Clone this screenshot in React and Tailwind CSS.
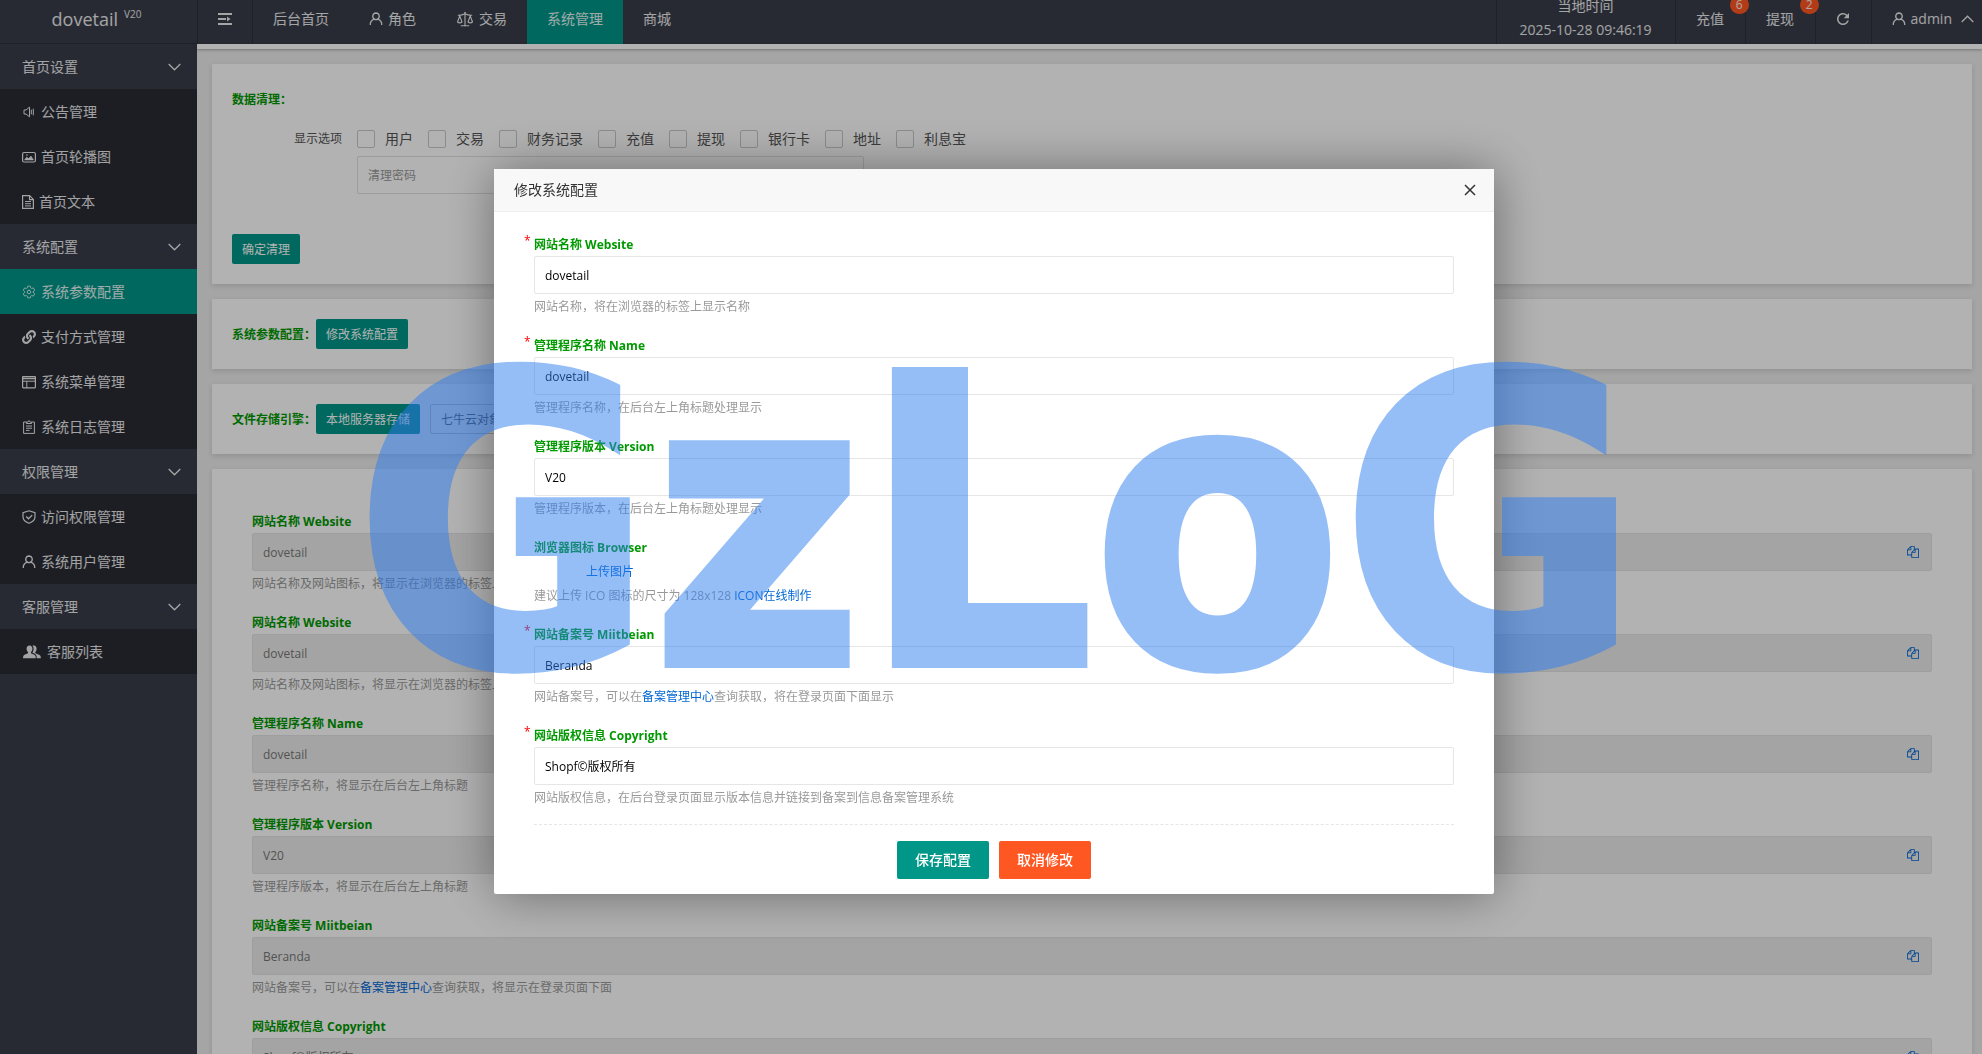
import { useState } from "react";
import { FaLink } from "react-icons/fa";
import { IoSettingsOutline } from "react-icons/io5";
import { MdRefresh } from "react-icons/md";
import { Scale } from "lucide-react";

const Icon = ({ children, className = "size-[14px]", box = "0 0 14 14" }) => (
  <svg
    className={`shrink-0 ${className}`}
    viewBox={box}
    fill="none"
    stroke="currentColor"
    aria-hidden="true"
  >
    {children}
  </svg>
);

const UserIcon = () => (
  <Icon>
    <path d="M7 1a3.3 3.3 0 0 1 1.7 6.1 5.7 5.7 0 0 1 4 5.9M7 1a3.3 3.3 0 0 0-1.7 6.1A5.7 5.7 0 0 0 1.3 13M5.3 7.1c1 .7 2.400.7 3.4 0" strokeWidth="1.3" />
  </Icon>
);

const SpeakerIcon = () => (
  <Icon>
    <path d="M2 5h2l3.500-2.800v9.600L4 9H2zM9.300 4.700v4.600M11.300 3.700v6.600" />
  </Icon>
);

const PictureIcon = () => (
  <Icon>
    <rect x="0.600" y="2.500" width="12.800" height="9.500" rx="1.500" strokeWidth="1.200" />
    <path d="M2.500 10l2.200-3 1.800 1.600L9 6l2.500 4z" fill="currentColor" strokeWidth="0.500" />
    <circle cx="5" cy="5" r="0.800" fill="currentColor" stroke="none" />
  </Icon>
);

const FileIcon = () => (
  <Icon className="w-3 h-[14px]" box="0 0 12 14">
    <path d="M.6.6h7L11.400 4.400v9H.6zM7.500.6v4h3.900" strokeWidth="1.200" />
    <path d="M3 6.500h6M3 8.700h6M3 10.900h6" />
  </Icon>
);

const MenuIcon = () => (
  <Icon>
    <rect x="0.600" y="1.600" width="12.800" height="11.200" rx="0.500" strokeWidth="1.200" />
    <path d="M.6 3.500h12.800" strokeWidth="1.500" />
    <path d="M.6 6.200h12.800M4.800 6.200v6.600" />
  </Icon>
);

const LogIcon = () => (
  <Icon>
    <path d="M4.500 2H1.600v11.400h10.800V2H9.500" />
    <path d="M4.500 3.500V2.200h1.200a1.300 1.300 0 0 1 2.600 0h1.200v1.300z" />
    <path d="M4 6h6M4 8.200h6M4 10.400h3.500" />
  </Icon>
);

const ShieldIcon = () => (
  <Icon>
    <path d="M7 .8 13 2.800v4c0 3-2.500 5.300-6 6.500C3.500 12.100 1 9.800 1 6.800v-4z" strokeWidth="1.200" />
    <path d="m4.200 6.500 2.300 2.300 3.700-3.700" strokeWidth="1.300" />
  </Icon>
);

const GroupIcon = () => (
  <Icon className="w-5 h-[14px]" box="0 0 18 14">
    <g fill="currentColor" stroke="none">
      <path d="M6.500.5c1.900 0 2.900 1.300 2.900 3.200 0 1.500-.7 2.700-1.400 3.300v1.200l3.300 1.500c1 .5 1.500 1.400 1.500 3.600H0c0-2.200.5-3.100 1.500-3.600L5 8.200V7c-.8-.6-1.400-1.800-1.400-3.300C3.600 1.800 4.600.5 6.500.5z" />
      <path d="M9.300.8c.4-.2.900-.3 1.500-.3 1.900 0 2.800 1.300 2.800 3.200 0 1.500-.6 2.700-1.300 3.300v1.200l3.700 1.500c1.300.5 1.900 1.400 1.900 3.600h-4.100c0-2.400-.6-3.900-2-4.600L9.300 7.600c.9-1 1.300-2.300 1.300-3.800C10.600 2.600 10.200 1.500 9.300.8z" />
    </g>
  </Icon>
);

const Chevron = ({ up }) => (
  <Icon className="w-[13px] h-2" box="0 0 13 8">
    <path d={up ? "M.7 7 6.500 1.200 12.300 7" : "M.7 1 6.500 6.800 12.300 1"} strokeWidth="1.300" />
  </Icon>
);

const CopyIcon = () => (
  <svg className="size-3" viewBox="0 0 1792 1792" fill="currentColor" aria-hidden="true">
    <path d="M1696 384q40 0 68 28t28 68v1216q0 40-28 68t-68 28h-960q-40 0-68-28t-28-68v-288h-544q-40 0-68-28t-28-68v-672q0-40 20-88t48-76l408-408q28-28 76-48t88-20h416q40 0 68 28t28 68v328q68-40 128-40h416zm-544 213l-299 299h299v-299zm-640-384l-299 299h299v-299zm196 647l316-316v-416h-384v416q0 40-28 68t-68 28h-416v640h512v-256q0-40 20-88t48-76zm956 804v-1152h-384v416q0 40-28 68t-68 28h-416v640h896z" />
  </svg>
);

const menu = [
  {
    title: "首页设置",
    items: [
      { icon: <SpeakerIcon />, label: "公告管理" },
      { icon: <PictureIcon />, label: "首页轮播图" },
      { icon: <FileIcon />, label: "首页文本" },
    ],
  },
  {
    title: "系统配置",
    items: [
      { icon: <IoSettingsOutline size={14} />, label: "系统参数配置", active: true },
      { icon: <FaLink size={14} />, label: "支付方式管理" },
      { icon: <MenuIcon />, label: "系统菜单管理" },
      { icon: <LogIcon />, label: "系统日志管理" },
    ],
  },
  {
    title: "权限管理",
    items: [
      { icon: <ShieldIcon />, label: "访问权限管理" },
      { icon: <UserIcon />, label: "系统用户管理" },
    ],
  },
  {
    title: "客服管理",
    items: [{ icon: <GroupIcon />, label: "客服列表" }],
  },
];

const navItems = [
  { label: "后台首页" },
  { label: "角色", icon: <UserIcon /> },
  { label: "交易", icon: <Scale size={18} strokeWidth={1.5} /> },
  { label: "系统管理", active: true },
  { label: "商城" },
];

const cleanOptions = ["用户", "交易", "财务记录", "充值", "提现", "银行卡", "地址", "利息宝"];

const Link = ({ children }) => (
  <a href="#" className="text-[#0066d6]">
    {children}
  </a>
);

const configRows = [
  { label: "网站名称 Website", value: "dovetail", hint: "网站名称及网站图标，将显示在浏览器的标签上" },
  { label: "网站名称 Website", value: "dovetail", hint: "网站名称及网站图标，将显示在浏览器的标签上" },
  { label: "管理程序名称 Name", value: "dovetail", hint: "管理程序名称，将显示在后台左上角标题" },
  { label: "管理程序版本 Version", value: "V20", hint: "管理程序版本，将显示在后台左上角标题" },
  {
    label: "网站备案号 Miitbeian",
    value: "Beranda",
    hint: (
      <>
        网站备案号，可以在<Link>备案管理中心</Link>查询获取，将显示在登录页面下面
      </>
    ),
  },
  { label: "网站版权信息 Copyright", value: "Shopf©版权所有", hint: "网站版权信息，将显示在登录页面" },
];

const Sidebar = () => (
  <aside className="w-[197px] shrink-0 bg-[#393D49] text-sm text-white">
    <div className="h-11 pr-1 pb-1.5 flex items-center justify-center gap-1.5 border-b border-black/20 text-white/90">
      <span className="text-lg">dovetail</span>
      <sup className="text-[10px]">V20</sup>
    </div>
    <nav>
      {menu.map((group) => (
        <div key={group.title}>
          <button className="w-full h-[45px] pl-[22px] pr-4 flex items-center justify-between text-white/90">
            {group.title}
            <Chevron />
          </button>
          <div className="bg-[#292b34]">
            {group.items.map((item) => (
              <a
                key={item.label}
                href="#"
                className={`h-[45px] pl-[22px] flex items-center gap-[5px] text-white/90 ${
                  item.active ? "bg-[#009688]" : ""
                }`}
              >
                {item.icon}
                {item.label}
              </a>
            ))}
          </div>
        </div>
      ))}
    </nav>
  </aside>
);

const Badge = ({ children }) => (
  <span className="absolute -top-1 -right-1 z-10 h-[18px] w-[19px] rounded-full bg-[#FF5722] text-center text-xs leading-[18px]">
    {children}
  </span>
);

const Header = () => (
  <header className="h-11 flex justify-between bg-[#393D49] text-sm text-white/90">
    <div className="flex">
      <button aria-label="收起菜单" className="w-14 pb-1.5 flex items-center justify-center border-x border-black/20">
        <Icon>
          <path d="M0 2h14M0 7h8M0 12h14" strokeWidth="1.800" />
          <path d="M9 4.500v5L12.500 7z" fill="currentColor" stroke="none" />
        </Icon>
      </button>
      {navItems.map((item) => (
        <a
          key={item.label}
          href="#"
          className={`px-5 pb-1.5 flex items-center gap-[5px] ${item.active ? "bg-[#009688]" : ""}`}
        >
          {item.icon}
          {item.label}
        </a>
      ))}
    </div>
    <div className="flex">
      <div className="w-[180px] pb-2 flex flex-col items-center justify-center border-x border-black/20 leading-6">
        <span>当地时间</span>
        <span>2025-10-28 09:46:19</span>
      </div>
      <a href="#" className="relative w-[70px] pb-1.5 flex items-center justify-center border-r border-black/20">
        充值<Badge>6</Badge>
      </a>
      <a href="#" className="relative w-[70px] pb-1.5 flex items-center justify-center border-r border-black/20">
        提现<Badge>2</Badge>
      </a>
      <button aria-label="刷新" className="w-14 pb-1.5 flex items-center justify-center border-r border-black/20">
        <MdRefresh size={18} />
      </button>
      <button className="pl-5 pr-2 pb-1.5 flex items-center gap-[5px]">
        <UserIcon />
        admin
        <span className="ml-1">
          <Chevron up />
        </span>
      </button>
    </div>
  </header>
);

const Card = ({ children, className = "p-5" }) => (
  <section className={`bg-white shadow-[0_2px_5px_rgba(0,0,0,0.12)] ${className}`}>{children}</section>
);

const Title = ({ children }) => <h2 className="pt-0.5 font-bold text-[#009900]">{children}</h2>;

const SmallButton = ({ children, outline, onClick }) => (
  <button
    onClick={onClick}
    className={`h-[30px] px-2.5 pt-0.5 rounded-[2px] text-xs ${
      outline ? "border border-[#c9c9c9] bg-white text-[#555]" : "bg-[#009688] text-white"
    }`}
  >
    {children}
  </button>
);

const ConfigRow = ({ id, label, value, hint }) => (
  <div className="mb-[15px]">
    <label htmlFor={id} className="block pt-0.5 leading-[22px] font-bold text-[#009900]">
      {label}
    </label>
    <div className="h-[38px] flex items-center rounded-[2px] border border-[#e2e2e2] bg-[#ebebeb]">
      <input id={id} readOnly defaultValue={value} className="h-full flex-1 px-2.5 text-[#777] outline-none" />
      <button aria-label="复制" className="px-3 text-[#0066d6]">
        <CopyIcon />
      </button>
    </div>
    <p className="pt-0.5 leading-[22px] text-[#999]">{hint}</p>
  </div>
);

const Field = ({ id, label, required, value, hint }) => (
  <div className="mb-[15px]">
    <label htmlFor={id} className="relative block pt-0.5 leading-[22px] font-bold text-[#009900]">
      {required && <span className="absolute -left-2.5 -top-0.5 font-normal text-[#f00]">*</span>}
      {label}
    </label>
    <input
      id={id}
      required={required}
      defaultValue={value}
      className="block h-[38px] w-full rounded-[2px] border border-[#e6e6e6] px-2.5 text-black outline-none"
    />
    <p className="pt-0.5 leading-[22px] text-[#999]">{hint}</p>
  </div>
);

const ConfigDialog = ({ onClose }) => (
  <div
    role="dialog"
    aria-label="修改系统配置"
    className="w-[1000px] rounded-[2px] bg-white text-xs shadow-[1px_1px_50px_rgba(0,0,0,0.4)]"
  >
    <div className="h-[43px] pl-5 pr-[18px] flex items-center justify-between border-b border-[#eee] bg-[#f8f8f8] text-sm text-[#333]">
      修改系统配置
      <button aria-label="关闭" onClick={onClose}>
        <Icon className="size-3" box="0 0 12 12">
          <path d="m1 1 10 10M11 1 1 11" strokeWidth="1.500" />
        </Icon>
      </button>
    </div>
    <form className="px-10 pt-5 pb-[15px]" onSubmit={(e) => e.preventDefault()}>
      <Field id="site" label="网站名称 Website" required value="dovetail" hint="网站名称，将在浏览器的标签上显示名称" />
      <Field id="name" label="管理程序名称 Name" required value="dovetail" hint="管理程序名称，在后台左上角标题处理显示" />
      <Field id="version" label="管理程序版本 Version" value="V20" hint="管理程序版本，在后台左上角标题处理显示" />
      <div className="mb-[15px] leading-[22px]">
        <p className="pt-0.5 font-bold text-[#009900]">浏览器图标 Browser</p>
        <p className="pt-0.5 pl-[52px]">
          <Link>上传图片</Link>
        </p>
        <p className="pt-0.5 text-[#999]">
          建议上传 ICO 图标的尺寸为 128x128 <Link>ICON在线制作</Link>
        </p>
      </div>
      <Field
        id="miitbeian"
        label="网站备案号 Miitbeian"
        required
        value="Beranda"
        hint={
          <>
            网站备案号，可以在<Link>备案管理中心</Link>查询获取，将在登录页面下面显示
          </>
        }
      />
      <Field
        id="copyright"
        label="网站版权信息 Copyright"
        required
        value="Shopf©版权所有"
        hint="网站版权信息，在后台登录页面显示版本信息并链接到备案到信息备案管理系统"
      />
      <div className="pt-4 flex justify-center gap-2.5 border-t border-dashed border-[#e6e6e6] text-sm font-medium text-white">
        <button type="submit" className="h-[38px] px-[18px] rounded-[2px] bg-[#009688]">
          保存配置
        </button>
        <button type="button" onClick={onClose} className="h-[38px] px-[18px] rounded-[2px] bg-[#FF5722]">
          取消修改
        </button>
      </div>
    </form>
  </div>
);

export default function App() {
  const [open, setOpen] = useState(true);

  return (
    <div className="h-screen flex overflow-hidden bg-[#ececec] font-['Open_Sans','Noto_Sans_CJK_SC',sans-serif]">
      <Sidebar />
      <div className="min-w-0 flex-1 flex flex-col">
        <Header />
        <div className="h-[5px] shrink-0 bg-white shadow-[0_1px_3px_rgba(0,0,0,0.3)]" />
        <main className="min-h-0 flex-1 overflow-hidden pt-[15px] pl-[15px] pr-2.5 text-xs">
          <div className="flex flex-col gap-[15px]">
            {/* Data cleanup */}
            <Card>
              <div className="h-[30px] flex items-center">
                <Title>数据清理：</Title>
              </div>
              <div className="mt-2.5 h-[30px] flex items-center">
                <span className="w-[110px] mr-[15px] text-right text-[#555]">显示选项</span>
                {cleanOptions.map((option) => (
                  <label key={option} className="mr-[15px] flex items-center gap-2.5 text-sm text-[#555]">
                    <input
                      type="checkbox"
                      className="size-[18px] appearance-none rounded-[2px] border border-[#c9c9c9] bg-white"
                    />
                    {option}
                  </label>
                ))}
              </div>
              <input
                type="password"
                aria-label="清理密码"
                placeholder="清理密码"
                className="mt-0.5 ml-[125px] block h-[38px] w-[507px] rounded-[2px] border border-[#e0e0e0] bg-white px-2.5 placeholder-[#999]"
              />
              <div className="mt-10">
                <SmallButton>确定清理</SmallButton>
              </div>
            </Card>

            <Card className="p-5 flex items-center">
              <Title>系统参数配置：</Title>
              <SmallButton onClick={() => setOpen(true)}>修改系统配置</SmallButton>
            </Card>

            <Card className="p-5 flex items-center">
              <Title>文件存储引擎：</Title>
              <div className="flex gap-2.5">
                <SmallButton>本地服务器存储</SmallButton>
                <SmallButton outline>七牛云对象存储</SmallButton>
              </div>
            </Card>

            {/* Current configuration */}
            <Card className="p-10">
              {configRows.map((row, i) => (
                <ConfigRow key={i} id={`config-${i}`} {...row} />
              ))}
            </Card>
          </div>
        </main>
      </div>

      {open && (
        <div className="fixed inset-0 z-20 flex items-center justify-center bg-black/30 pl-1.5 pt-[9px]">
          <ConfigDialog onClose={() => setOpen(false)} />
        </div>
      )}

      {/* Watermark */}
      <div className="pointer-events-none fixed inset-0 z-30 flex items-center justify-center pl-3 pb-1 font-['DejaVu_Sans_Condensed','DejaVu_Sans',sans-serif] text-[402px] leading-none font-bold text-[#2d7def] opacity-50 [-webkit-text-stroke:8px_#2d7def]">
        GzLoG
      </div>
    </div>
  );
}
